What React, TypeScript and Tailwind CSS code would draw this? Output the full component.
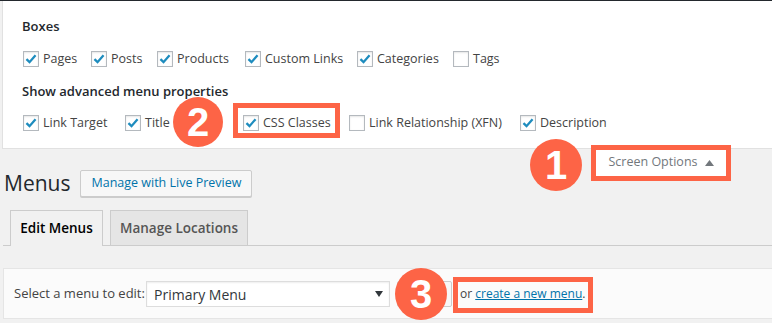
import React from "react";

const FONT = { fontFamily: '"Open Sans", "Noto Sans", Arial, sans-serif' };

function Box({ checked }: { checked: boolean }) {
  return (
    <span className="w-4 h-4 shrink-0 border border-[#b4b9be] bg-white shadow-[inset_0_1px_2px_rgba(0,0,0,0.1)] flex items-center justify-center">
      {checked && (
        <svg width="14" height="14" viewBox="0 0 16 16">
          <path d="M2.8 8.2 L6.3 11.6 L13.2 3.6" fill="none" stroke="#1e8cbe" strokeWidth="2.6" strokeLinecap="butt" strokeLinejoin="miter" />
        </svg>
      )}
    </span>
  );
}

function Item({ label, checked, w }: { label: string; checked: boolean; w: string }) {
  return (
    <label className={`flex items-center gap-[4px] shrink-0 ${w}`}>
      <Box checked={checked} />
      <span className="text-[12.5px] text-[#444] whitespace-nowrap">{label}</span>
    </label>
  );
}

function Circle({ n, cls }: { n: string; cls: string }) {
  return (
    <div
      className={`absolute rounded-full bg-[#fd6446] text-white flex items-center justify-center font-bold text-[40px] leading-none ${cls}`}
      style={{ fontFamily: '"Liberation Sans", Arial, sans-serif' }}
    >
      {n}
    </div>
  );
}

export default function App() {
  return (
    <div className="relative w-full h-[323px] overflow-hidden bg-[#f1f1f1]" style={FONT}>
      <div className="h-px bg-[#23282d]" />
      {/* Screen options panel */}
      <div className="ml-[2px] bg-white border-l border-b border-[#e1e1e1] pl-[19px] pt-[16px] h-[148px]">
        <div className="h-[20px] flex items-center text-[13px] font-semibold text-[#23282d]">Boxes</div>
        <div className="mt-[10px] h-[24px] flex items-center pl-[1px]">
          <Item label="Pages" checked w="w-[68px]" />
          <Item label="Posts" checked w="w-[66px]" />
          <Item label="Products" checked w="w-[88px]" />
          <Item label="Custom Links" checked w="w-[112px]" />
          <Item label="Categories" checked w="w-[96px]" />
          <Item label="Tags" checked={false} w="w-[60px]" />
        </div>
        <div className="mt-[11px] h-[20px] flex items-center text-[13px] font-semibold text-[#23282d]">
          Show advanced menu properties
        </div>
        <div className="mt-[9px] h-[24px] flex items-center pl-[1px]">
          <Item label="Link Target" checked w="w-[102px]" />
          <Item label="Title" checked w="w-[118px]" />
          <Item label="CSS Classes" checked w="w-[106px]" />
          <Item label="Link Relationship (XFN)" checked={false} w="w-[171px]" />
          <Item label="Description" checked w="w-[100px]" />
        </div>
      </div>

      {/* Heading row with screen options tab */}
      <div className="flex items-start justify-between">
        <div className="mt-[21px] flex items-center pl-[4px]">
          <h1 className="text-[21px] leading-[27px] text-[#23282d] font-normal">Menus</h1>
          <button className="ml-[10px] h-[27px] px-[10px] border border-[#ccc] bg-[#f7f7f7] rounded-[2px] text-[12.5px] text-[#0073aa] shadow-[0_1px_0_#ccc]">
            Manage with Live Preview
          </button>
        </div>
        <div className="mr-[45px] w-[132px] h-[28px] bg-white border border-t-0 border-[#ddd] flex items-center justify-center gap-[7px] text-[12.5px] text-[#72777c]">
          <span>Screen Options</span>
          <svg width="9" height="6" viewBox="0 0 9 6">
            <path d="M0 6 L4.5 0 L9 6 Z" fill="#72777c" />
          </svg>
        </div>
      </div>

      {/* Tabs */}
      <div className="mt-[13px] ml-[3px] pl-[7px] border-b border-[#ccc] flex items-end gap-[7px] h-[36px]">
        <div className="w-[93px] h-[36px] border border-b-0 border-[#ccc] bg-[#f1f1f1] flex items-center justify-center text-[13.5px] font-semibold text-black -mb-px pb-px">
          Edit Menus
        </div>
        <div className="w-[138px] h-[35px] border border-b-0 border-[#ccc] bg-[#e5e5e5] flex items-center justify-center text-[13.5px] font-semibold text-[#555]">
          Manage Locations
        </div>
      </div>

      {/* Select a menu panel */}
      <div className="mt-[22px] ml-[3px] bg-[#fbfbfb] border border-r-0 border-[#e5e5e5] pl-[10px] pt-[12px] pb-[11px] flex items-center">
        <span className="text-[13px] text-[#444] w-[132px]">Select a menu to edit:</span>
        <div className="w-[244px] h-[26px] bg-white border border-[#ddd] shadow-[inset_0_1px_2px_rgba(0,0,0,0.07)] flex items-center justify-between pl-[7px] pr-[6px]">
          <span className="text-[14px] text-[#32373c]">Primary Menu</span>
          <svg width="8" height="6" viewBox="0 0 8 6">
            <path d="M0 0 L8 0 L4 6 Z" fill="#32373c" />
          </svg>
        </div>
        <button aria-label="Select" className="ml-[7px] w-[55px] h-[26px] border border-[#ccc] bg-[#f7f7f7] rounded-[2px]" />
        <span className="ml-[8px] text-[12px] text-[#444]">
          or <a className="text-[#0073aa] underline">create a new menu</a>.
        </span>
      </div>

      {/* Annotations */}
      <div className="absolute left-[233px] top-[103px] w-[107px] h-[35px] border-[5px] border-[#fd6446]" />
      <div className="absolute left-[591px] top-[145px] w-[140px] h-[36px] border-[5px] border-[#fd6446]" />
      <div className="absolute left-[453px] top-[277px] w-[140px] h-[36px] border-[5px] border-[#fd6446]" />
      <Circle n="2" cls="left-[173px] top-[97px] w-[50px] h-[50px]" />
      <Circle n="1" cls="left-[530px] top-[139px] w-[52px] h-[52px]" />
      <Circle n="3" cls="left-[395px] top-[268px] w-[52px] h-[52px]" />
    </div>
  );
}
